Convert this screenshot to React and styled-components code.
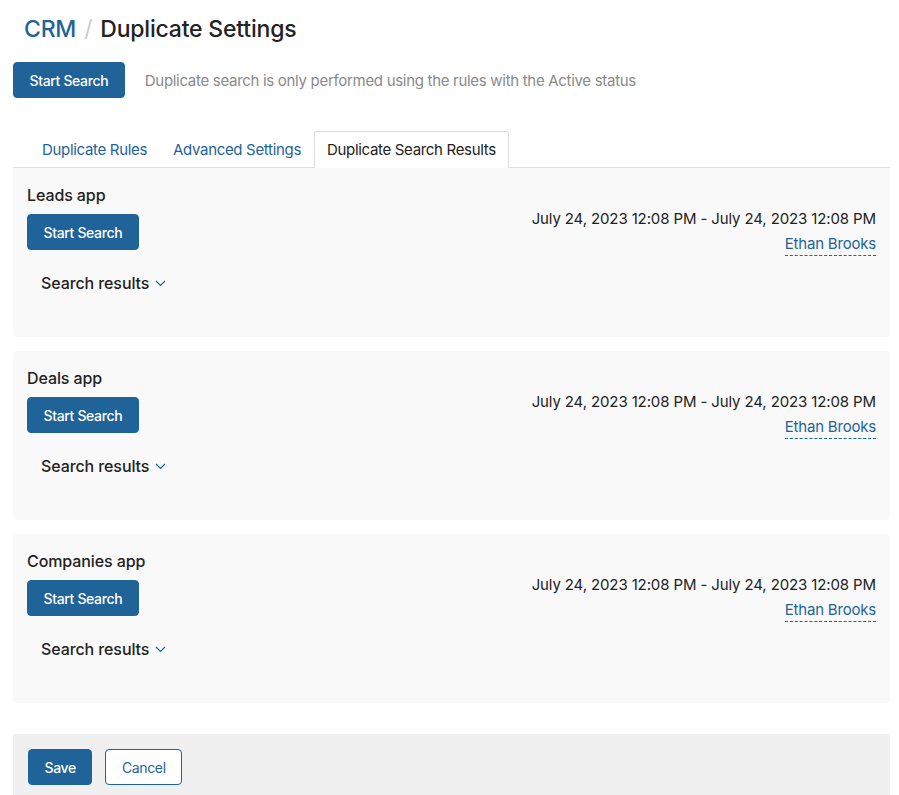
import React from 'react';
import styled, { createGlobalStyle } from 'styled-components';

const GlobalStyle = createGlobalStyle`
  body {
    margin: 0;
    background: #fff;
    font-family: Inter, "Noto Sans", sans-serif;
    color: #222;
  }
`;

const Page = styled.div`
  padding: 0 9px 0 13px;
`;

const Header = styled.h1`
  margin: 0;
  padding: 14px 0 0 11px;
  height: 30px;
  font-size: 23px;
  font-weight: 500;
  line-height: 30px;
  color: #222;
  letter-spacing: -0.2px;
`;

const Crumb = styled.span`
  color: #1f6399;
`;

const Slash = styled.span`
  color: #ccc;
  margin: 0 8px;
  font-weight: 400;
`;

const Toolbar = styled.div`
  display: flex;
  align-items: center;
  gap: 20px;
  margin-top: 18px;
`;

const Button = styled.button`
  height: 36px;
  padding: 0 15.5px;
  border-radius: 4px;
  border: 1px solid #1f6399;
  background: ${(p) => (p.$outline ? '#fff' : '#1f6399')};
  color: ${(p) => (p.$outline ? '#1f6399' : '#fff')};
  font-family: inherit;
  font-size: 14px;
  font-weight: ${(p) => (p.$outline ? 400 : 500)};
  letter-spacing: -0.35px;
  cursor: pointer;
`;

const Hint = styled.span`
  font-size: 15px;
  color: #8a8a8a;
  letter-spacing: -0.3px;
`;

const Tabs = styled.div`
  display: flex;
  margin-top: 33px;
  padding-left: 16px;
  border-bottom: 1px solid #dedede;
  height: 36px;
`;

const Tab = styled.div`
  display: flex;
  align-items: center;
  padding: 0 12px;
  margin-bottom: -1px;
  font-size: 15px;
  letter-spacing: -0.32px;
  color: ${(p) => (p.$active ? '#222' : '#1f6399')};
  background: ${(p) => (p.$active ? '#fff' : 'transparent')};
  border: 1px solid ${(p) => (p.$active ? '#dedede' : 'transparent')};
  border-bottom-color: ${(p) => (p.$active ? '#fff' : 'transparent')};
  border-radius: 3px 3px 0 0;
`;

const Cards = styled.div`
  display: flex;
  flex-direction: column;
  gap: 14px;
`;

const Card = styled.section`
  display: flex;
  justify-content: space-between;
  height: 169px;
  box-sizing: border-box;
  padding: 16px 14px 0 14px;
  background: #f9f9f9;
  border-radius: 0 0 4px 4px;
  &:not(:first-child) {
    border-radius: 4px;
  }
`;

const CardMain = styled.div`
  display: flex;
  flex-direction: column;
  align-items: flex-start;
`;

const CardTitle = styled.div`
  font-size: 16px;
  font-weight: 500;
  line-height: 22px;
  letter-spacing: -0.1px;
  margin-bottom: 8px;
`;

const ResultsToggle = styled.div`
  display: flex;
  align-items: center;
  gap: 6px;
  margin: 22px 0 0 14px;
  font-size: 16px;
  font-weight: 500;
  line-height: 22px;
  letter-spacing: -0.1px;
  color: #222;
`;

const CardMeta = styled.div`
  display: flex;
  flex-direction: column;
  align-items: flex-end;
  padding-top: 25px;
`;

const Period = styled.div`
  font-size: 15px;
  line-height: 20px;
  letter-spacing: -0.12px;
  color: #222;
`;

const Author = styled.a`
  margin-top: 5px;
  font-size: 15px;
  line-height: 20px;
  letter-spacing: -0.2px;
  color: #1f6399;
  text-decoration: none;
  border-bottom: 1px dashed #1f6399;
  padding-bottom: 1px;
`;

const Footer = styled.footer`
  display: flex;
  gap: 13px;
  margin-top: 31px;
  padding: 15px 15px 10px;
  background: #f0f0f0;
  border-radius: 0 4px 0 0;
`;

const Chevron = () => (
  <svg width="11" height="7" viewBox="0 0 11 7" fill="none">
    <path d="M1 1l4.5 4.5L10 1" stroke="#1f6399" strokeWidth="1.2" />
  </svg>
);

const apps = ['Leads app', 'Deals app', 'Companies app'];

export default function App() {
  return (
    <>
      <GlobalStyle />
      <Page>
        <Header>
          <Crumb>CRM</Crumb>
          <Slash>/</Slash>
          Duplicate Settings
        </Header>
        <Toolbar>
          <Button>Start Search</Button>
          <Hint>Duplicate search is only performed using the rules with the Active status</Hint>
        </Toolbar>
        <Tabs>
          <Tab>Duplicate Rules</Tab>
          <Tab>Advanced Settings</Tab>
          <Tab $active>Duplicate Search Results</Tab>
        </Tabs>
        <Cards>
          {apps.map((app) => (
            <Card key={app}>
              <CardMain>
                <CardTitle>{app}</CardTitle>
                <Button>Start Search</Button>
                <ResultsToggle>
                  Search results <Chevron />
                </ResultsToggle>
              </CardMain>
              <CardMeta>
                <Period>July 24, 2023 12:08 PM - July 24, 2023 12:08 PM</Period>
                <Author href="#">Ethan Brooks</Author>
              </CardMeta>
            </Card>
          ))}
        </Cards>
        <Footer>
          <Button>Save</Button>
          <Button $outline>Cancel</Button>
        </Footer>
      </Page>
    </>
  );
}
